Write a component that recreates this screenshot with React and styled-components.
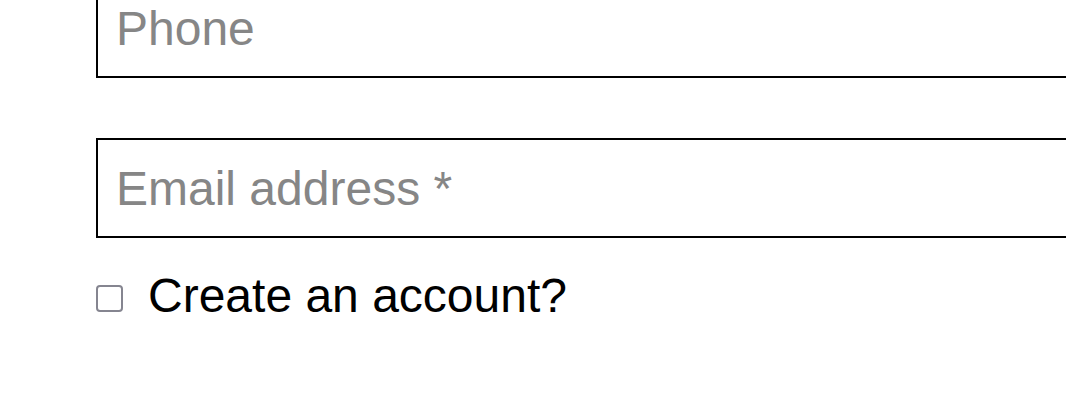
import styled, { createGlobalStyle } from "styled-components";

const GlobalStyle = createGlobalStyle`
  html, body {
    margin: 0;
    padding: 0;
    overflow: hidden;
    background: #fff;
  }
  body {
    font-family: "Liberation Sans", Arial, sans-serif;
  }
`;

const Form = styled.form`
  display: flex;
  flex-direction: column;
  gap: 60px;
  margin-top: -22px;
  padding-left: 96px;
`;

const Input = styled.input`
  display: block;
  box-sizing: border-box;
  width: 1100px;
  height: 100px;
  padding: 0 18px;
  margin: 0;
  border: 2px solid #000;
  border-radius: 0;
  background: #fff;
  font-family: "Liberation Sans", Arial, sans-serif;
  font-size: 48px;
  color: #000;
  outline: none;

  &::placeholder {
    color: #868686;
    opacity: 1;
  }
`;

const CheckRow = styled.label`
  display: flex;
  align-items: flex-start;
  gap: 25px;
  margin-top: -30px;
  cursor: pointer;
`;

const Box = styled.input`
  appearance: none;
  -webkit-appearance: none;
  box-sizing: border-box;
  width: 27px;
  height: 27px;
  margin: 17px 0 0;
  border: 2px solid #858590;
  border-radius: 4px;
  background: #fff;
  flex-shrink: 0;
`;

const LabelText = styled.span`
  font-size: 48px;
  line-height: 55px;
  color: #000;
`;

export default function App() {
  return (
    <>
      <GlobalStyle />
      <Form onSubmit={(e) => e.preventDefault()}>
        <Input type="tel" placeholder="Phone" />
        <Input type="email" placeholder="Email address *" />
        <CheckRow>
          <Box type="checkbox" />
          <LabelText>Create an account?</LabelText>
        </CheckRow>
      </Form>
    </>
  );
}
